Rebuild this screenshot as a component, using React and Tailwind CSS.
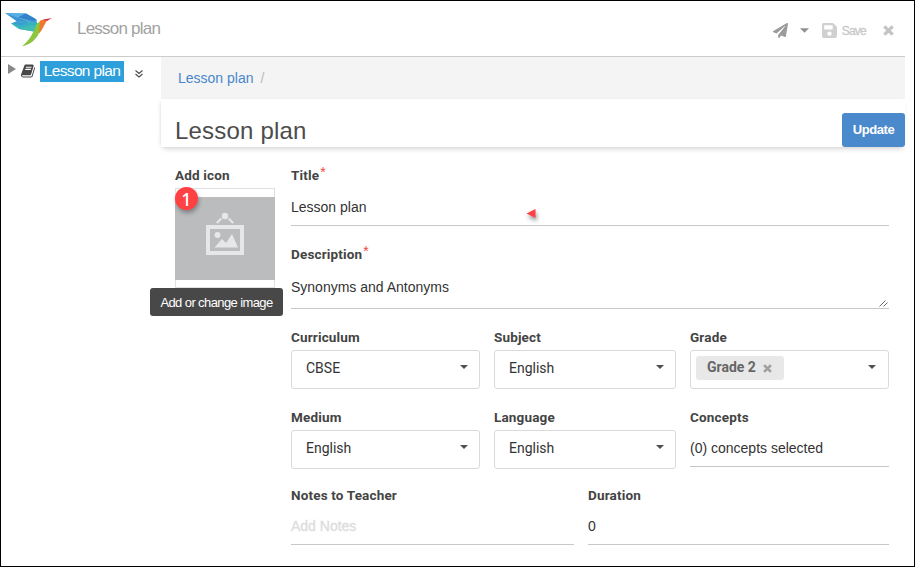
import React from "react";
import { FaPaperPlane, FaSave } from "react-icons/fa";

function Bird() {
  return (
    <svg className="block h-[36px] w-[48px]" viewBox="0 0 48 36">
      <path d="M0 2 21 2.500 31.500 8.500 32 13 26 11Z" fill="#3f97d6" />
      <path d="M0 2 13 6.500 21 2.500Z" fill="#58aee6" />
      <path d="M13 6.500 21 2.500 31.500 8.500 28 9.500Z" fill="#3182c8" />
      <path d="M0 2 12 10.500 26 11 13 6.500Z" fill="#3a93d4" />
      <path d="M6 12.500 20 10 33 12 29 20.500 14 18Z" fill="#36b3c0" />
      <path d="M6 12.500 12 10 24 11 17 14.500Z" fill="#3a9fd0" />
      <path d="M14 18 25 14.500 32 15 28.500 20.500Z" fill="#43bdb4" />
      <path d="M31.500 17 35 9.700 38.500 8.500 42.500 9.300C39.500 12 39 17 34 22.500Z" fill="#f0772b" />
      <path d="M38 8.500 47 7 42 10Z" fill="#d9344b" />
      <path d="M31.500 13 35 10.500 34 22C31.500 28 26 33.500 17 35.300 22.500 31 28 24 31.500 13Z" fill="#8cc63f" />
    </svg>
  );
}

function Caret({ className = "" }) {
  return (
    <svg className={`h-[4px] w-[8px] shrink-0 ${className}`} viewBox="0 0 8 4">
      <path d="M0 0h8L4 4Z" fill="currentColor" />
    </svg>
  );
}

// Bold cross shared by the close button and the removable chip
function Cross({ className = "" }) {
  return (
    <svg className={`shrink-0 ${className}`} viewBox="0 0 10 10">
      <path d="M1.2 1.2 8.8 8.8M8.8 1.2 1.2 8.8" stroke="currentColor" strokeWidth="3" />
    </svg>
  );
}

function Label({ children, required }) {
  return (
    <div className="flex h-5 items-center font-[Roboto,sans-serif] text-[13.5px] font-bold tracking-[0.16px] text-[#444]">
      {children}
      {required && <span className="-mt-[6px] ml-[1px] font-[Liberation_Sans,Arial,sans-serif] text-[14px] font-normal text-[#f0483e]">*</span>}
    </div>
  );
}

function Select({ label, value, width }) {
  return (
    <div className={width}>
      <Label>{label}</Label>
      <div className="mt-[3px] flex h-[39px] items-center justify-between rounded-[3px] border border-[#dadada] pb-[3px] pl-[14px] pr-[11px]">
        <span className="font-[Roboto,sans-serif]">{value}</span>
        <Caret className="-mt-[3px] text-[#505050]" />
      </div>
    </div>
  );
}

function Header() {
  return (
    <header className="mr-[9px] flex h-[56px] shrink-0 items-center border-b border-[#ccc] pl-[4px]">
      <Bird />
      <h1 className="ml-[24px] text-[17px] tracking-[-0.78px] text-[#a2a2a2]">Lesson plan</h1>
      <div className="ml-auto flex items-center pr-[11px] pt-[4px]">
        <FaPaperPlane className="size-[15px] text-[#9b9b9b]" />
        <Caret className="ml-[12px] h-[5px] w-[9px] text-[#909090]" />
        <FaSave className="ml-[12px] size-[17px] text-[#d0d0d0]" />
        <span className="ml-[4px] text-[12px] tracking-[-0.75px] text-[#c8c8c8] [-webkit-text-stroke:0.3px_#c8c8c8]">Save</span>
        <Cross className="ml-[17px] size-[11px] text-[#c4c4c4]" />
      </div>
    </header>
  );
}

function Tree() {
  return (
    <aside className="flex w-[160px] items-start pl-[7px] pt-[4px]">
      <svg className="mt-[3px] h-[10px] w-[8px]" viewBox="0 0 8 10">
        <path d="M0 0 8 5 0 10Z" fill="#888" />
      </svg>
      <svg className="ml-[5px] mt-[3px] h-[14px] w-[14px]" viewBox="0 0 1664 1664">
        <path transform="translate(0 -64)" fill="#484848" d="M1639 478q40 57 18 129l-275 906q-19 64-76.500 107.500t-122.500 43.500h-923q-77 0-148.500-53.500t-99.500-131.500q-24-67-2-127 0-4 3-27t4-37q1-8-3-21.500t-3-19.500q2-11 8-21t16.500-23.500 16.500-23.500q23-38 45-91.500t30-91.500q3-10 .5-30t-.5-28q3-11 17-28t17-23q21-36 42-92t25-90q1-9-2.500-32t.5-28q4-13 22-30.500t22-22.500q19-26 42.500-84.500t27.500-96.500q1-8-3-25.500t-2-26.500q2-8 9-18t18-23 17-21q8-12 16.500-30.500t15-35 16-36 19.500-32 26.500-23.500 36-11.500 47.500 5.500l-1 3q38-9 51-9h761q74 0 114 56t18 130l-274 906q-36 119-71.500 153.500t-128.500 34.500h-869q-27 0-38 15-11 16-1 43 24 70 144 70h923q29 0 56-15.500t35-41.500l300-987q7-22 5-57 38 15 59 43zm-1064 2q-4 13 2 22.500t20 9.500h608q13 0 25.500-9.500t16.500-22.500l21-64q4-13-2-22.500t-20-9.500h-608q-13 0-25.500 9.500t-16.500 22.500zm-83 256q-4 13 2 22.500t20 9.500h608q13 0 25.500-9.500t16.500-22.500l21-64q4-13-2-22.500t-20-9.500h-608q-13 0-25.500 9.500t-16.500 22.500z" />
      </svg>
      <span className="ml-[5px] flex h-[21px] w-[84px] items-center justify-center whitespace-nowrap bg-[#2d9fda] pb-px text-[15.5px] tracking-[-0.63px] text-white">
        Lesson plan
      </span>
      <svg className="ml-[11px] mt-[9px] h-[8px] w-[8px]" viewBox="0 0 8 8" fill="none" stroke="#4a4a4a" strokeWidth="1.1">
        <path d="M.5.500 4 3.500 7.500.500M.5 4 4 7 7.500 4" />
      </svg>
    </aside>
  );
}

function Thumbnail() {
  return (
    <div className="w-[116px]">
      <Label>Add icon</Label>
      <div className="relative mt-[3px] h-[100px] w-[100px] border border-[#e0e0e0]">
        <div className="-mx-px mt-[8px] flex h-[83px] justify-center bg-[#bbbcbe]">
          <svg className="mt-[15px] h-[44px] w-[40px]" viewBox="0 0 40 44">
            <g fill="#e6e7e9">
              <circle cx="20" cy="4" r="3.200" />
              <path fillRule="evenodd" d="M1 13h38v30H1ZM5 17v22h30V17Z" />
              <circle cx="12.500" cy="23" r="3" />
              <path d="M9.500 35.500 17 27l4 4 6-9 6 13.500Z" />
            </g>
            <path d="m16.300 6.500-4.500 4.500M23.700 6.500l4.500 4.500" stroke="#e6e7e9" strokeWidth="2" />
          </svg>
        </div>
        <span className="absolute -left-[1px] -top-[2px] flex size-[23px] items-center justify-center rounded-full bg-[#ff4144] pt-px font-[Noto_Sans,sans-serif] text-[18px] font-medium text-white shadow-[1px_3px_4px_rgba(0,0,0,0.3)]">
          1
        </span>
        <span className="absolute -left-[26px] top-[99px] flex h-[28px] w-[133px] items-center justify-center whitespace-nowrap rounded-[3px] bg-[#484848] pt-px text-[13px] tracking-[-0.6px] text-white">
          Add or change image
        </span>
      </div>
    </div>
  );
}

function Form() {
  return (
    <div className="w-[598px]">
      <div className="relative h-[61px] border-b border-[#c8c8c8]">
        <Label required>Title</Label>
        <p className="mt-[12px]">Lesson plan</p>
        <svg className="absolute left-[235px] top-[43px] h-[16px] w-[16px] drop-shadow-[1px_3px_2px_rgba(0,0,0,0.45)]" viewBox="0 0 16 16">
          <path d="M.5 5.500 9.500 1v9Z" fill="#ff4144" />
        </svg>
      </div>
      <div className="relative mt-[18px] h-[65px] border-b border-[#c8c8c8]">
        <Label required>Description</Label>
        <p className="mt-[13px]">Synonyms and Antonyms</p>
        <svg className="absolute bottom-[1px] right-[1px] h-[7px] w-[9px]" viewBox="0 0 9 7" stroke="#555" strokeWidth=".9">
          <path d="M.5 6.500 6.500.5M4.500 6.500 8.500 2.500" />
        </svg>
      </div>
      <div className="mt-[18px] flex gap-[14px]">
        <Select label="Curriculum" value="CBSE" width="w-[189px]" />
        <Select label="Subject" value="English" width="w-[182px]" />
        <div className="w-[199px]">
          <Label>Grade</Label>
          <div className="mt-[3px] flex h-[39px] items-start justify-between rounded-[3px] border border-[#dadada] pl-[5px] pr-[12px] pt-[5px]">
            <span className="flex h-[24px] w-[88px] items-center rounded-[3px] bg-[#e8e8e8] pb-[2px] pl-[11px] font-[Roboto,sans-serif] font-bold text-[#666]">
              Grade 2
              <Cross className="ml-[7px] mt-[2px] size-[9px] text-[#a0a0a0]" />
            </span>
            <Caret className="mt-[9px] text-[#505050]" />
          </div>
        </div>
      </div>
      <div className="mt-[18px] flex gap-[14px]">
        <Select label="Medium" value="English" width="w-[189px]" />
        <Select label="Language" value="English" width="w-[182px]" />
        <div className="h-[60px] w-[199px] border-b border-[#c8c8c8]">
          <Label>Concepts</Label>
          <p className="mt-[11px]">(0) concepts selected</p>
        </div>
      </div>
      <div className="mt-[16px] flex gap-[14px]">
        <div className="h-[60px] w-[283px] border-b border-[#c8c8c8]">
          <Label>Notes to Teacher</Label>
          <p className="mt-[11px] text-[#dcdcdc] [-webkit-text-stroke:0.3px_#dcdcdc]">Add Notes</p>
        </div>
        <div className="h-[60px] w-[301px] border-b border-[#c8c8c8]">
          <Label>Duration</Label>
          <p className="mt-[11px]">0</p>
        </div>
      </div>
    </div>
  );
}

export default function App() {
  return (
    <div className="flex h-[567px] w-[915px] flex-col overflow-hidden border border-black bg-white font-[Liberation_Sans,Arial,sans-serif] text-[14px] leading-5 text-[#333]">
      <Header />
      <div className="flex">
        <Tree />
        <main className="w-[744px]">
          <div className="flex h-[42px] items-center bg-[#f4f4f4] pl-[17px] text-[#4787cb]">
            Lesson plan<span className="ml-[7px] text-[#bbb]">/</span>
          </div>
          <div className="flex h-[48px] justify-between bg-white pl-[14px] shadow-[0_4px_5px_-2px_rgba(0,0,0,0.16),-2px_0_4px_-2px_rgba(0,0,0,0.12)]">
            <h2 className="pt-[22px] text-[24px] tracking-[0.2px] text-[#4c4c4c]">Lesson plan</h2>
            <button className="mt-[14px] h-[34px] w-[63px] rounded-[3px] bg-[#4a89cc] text-[13px] font-bold tracking-[-0.4px] text-white">Update</button>
          </div>
          <div className="flex pl-[14px] pt-[18px]">
            <Thumbnail />
            <Form />
          </div>
        </main>
      </div>
    </div>
  );
}
